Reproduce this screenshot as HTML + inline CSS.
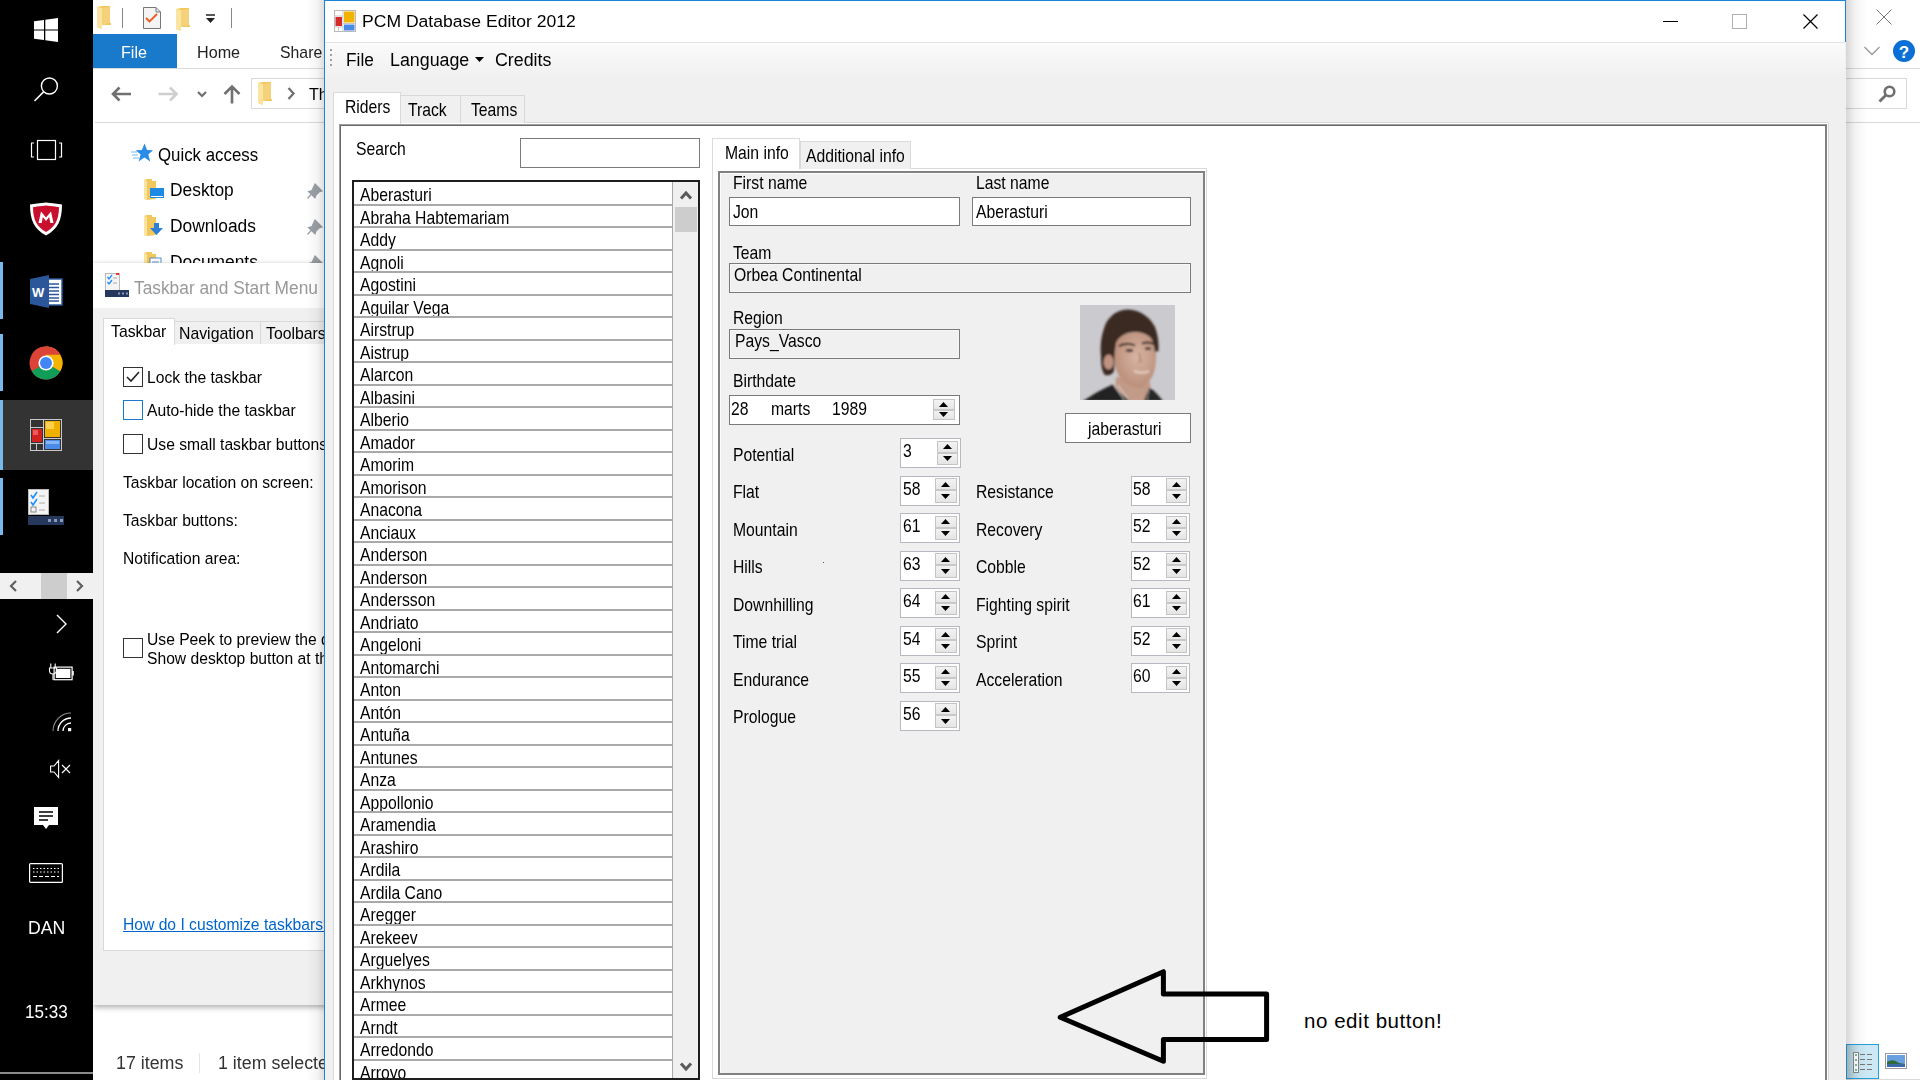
<!DOCTYPE html><html><head><meta charset="utf-8"><style>
html,body{margin:0;padding:0;width:1920px;height:1080px;overflow:hidden;background:#fff;position:relative;font-family:"Liberation Sans",sans-serif;}
.b{position:absolute;box-sizing:border-box;}
.t{position:absolute;white-space:nowrap;line-height:1;transform-origin:0 0;}
svg{position:absolute;overflow:visible;}
</style></head><body>

<div class="b" style="left:93px;top:34px;width:84px;height:34px;background:#1979ca"></div>
<div class="b" style="left:93px;top:68px;width:1827px;height:1px;background:#dadbdc"></div>
<span class="t" style="left:121px;top:43.61px;font-size:17px;transform:scaleX(0.95);color:#fff;">File</span>
<span class="t" style="left:197px;top:43.61px;font-size:17px;transform:scaleX(0.95);color:#222;">Home</span>
<span class="t" style="left:280px;top:43.61px;font-size:17px;transform:scaleX(0.93);color:#222;">Share</span>
<div class="b" style="left:95px;top:122px;width:1825px;height:1px;background:#d9d9d9"></div>
<div class="b" style="left:251px;top:78px;width:1656px;height:31px;border:1px solid #d9d9d9"></div>
<span class="t" style="left:309px;top:86.11px;font-size:17px;transform:scaleX(0.95);color:#000;">Th</span>
<span class="t" style="left:158px;top:145.76px;font-size:18px;transform:scaleX(0.935);color:#000;">Quick access</span>
<span class="t" style="left:170px;top:181.26px;font-size:18px;transform:scaleX(0.965);color:#000;">Desktop</span>
<span class="t" style="left:170px;top:217.26px;font-size:18px;transform:scaleX(0.965);color:#000;">Downloads</span>
<span class="t" style="left:170px;top:253.26px;font-size:18px;transform:scaleX(0.965);color:#000;">Documents</span>
<span class="t" style="left:116px;top:1053.76px;font-size:18px;transform:scaleX(0.99);color:#333;">17 items</span>
<div class="b" style="left:199px;top:1053px;width:1px;height:20px;background:#e5e5e5"></div>
<span class="t" style="left:218px;top:1053.76px;font-size:18px;transform:scaleX(0.99);color:#333;">1 item selected</span>
<svg style="left:97px;top:6px" width="16" height="24"><path d="M0 1 L5 0 L13 0 L13 17 L14 17 L14 19 L5 19 L5 23 L0 21 Z" fill="#f2c75c"/><path d="M0 1 L5 2 L5 23 L0 21 Z" fill="#fbe3a0"/><path d="M5 2 L13 1 L13 17 L5 19 Z" fill="#f5d27a"/></svg>
<div class="b" style="left:122px;top:8px;width:1px;height:20px;background:#888"></div>
<svg style="left:143px;top:7px" width="18" height="22"><path d="M0.5 0.5 H13 L17.5 5 V21.5 H0.5 Z" fill="#f4f4f4" stroke="#777"/><path d="M13 0.5 V5 H17.5" fill="none" stroke="#777"/><path d="M3 11 L6.5 14.5 L14 7" fill="none" stroke="#f05a1a" stroke-width="1.8"/></svg>
<svg style="left:176px;top:8px" width="16" height="24"><path d="M0 1 L5 0 L13 0 L13 17 L14 17 L14 19 L5 19 L5 23 L0 21 Z" fill="#f2c75c"/><path d="M0 1 L5 2 L5 23 L0 21 Z" fill="#fbe3a0"/><path d="M5 2 L13 1 L13 17 L5 19 Z" fill="#f5d27a"/></svg>
<svg style="left:205px;top:14px" width="12" height="10"><path d="M1 1 H10" stroke="#222" stroke-width="1.5"/><path d="M1 4 H10 L5.5 9 Z" fill="#222"/></svg>
<div class="b" style="left:231px;top:8px;width:1px;height:20px;background:#888"></div>
<svg style="left:111px;top:86px" width="22" height="16"><path d="M2 8 H20 M8.5 1.5 L2 8 L8.5 14.5" fill="none" stroke="#707070" stroke-width="2.6"/></svg>
<svg style="left:157px;top:86px" width="22" height="16"><path d="M19.5 8 H1.5 M13 1.5 L19.5 8 L13 14.5" fill="none" stroke="#cfcfcf" stroke-width="2.6"/></svg>
<svg style="left:197px;top:91px" width="10" height="7"><path d="M1 1 L5 5 L9 1" fill="none" stroke="#707070" stroke-width="2.2"/></svg>
<svg style="left:223px;top:84px" width="18" height="20"><path d="M9 19.5 V2.5 M1.5 10 L9 2.5 L16.5 10" fill="none" stroke="#707070" stroke-width="2.6"/></svg>
<svg style="left:258px;top:82px" width="16" height="24"><path d="M0 1 L5 0 L13 0 L13 17 L14 17 L14 19 L5 19 L5 23 L0 21 Z" fill="#f2c75c"/><path d="M0 1 L5 2 L5 23 L0 21 Z" fill="#fbe3a0"/><path d="M5 2 L13 1 L13 17 L5 19 Z" fill="#f5d27a"/></svg>
<svg style="left:287px;top:87px" width="8" height="13"><path d="M1.5 1 L6.5 6.5 L1.5 12" fill="none" stroke="#707070" stroke-width="2.3"/></svg>
<svg style="left:131px;top:143px" width="22" height="21"><path d="M13.5 0.5 L16 7 L22 7.3 L17.3 11.4 L19.2 18.4 L13.4 14.5 L7.6 18.4 L9.6 11.4 L4.7 7.3 L10.9 7 Z" fill="#2b8be8"/><path d="M0 9 H6 M1 12 H7 M2 15 H8" stroke="#7bbaf0" stroke-width="1"/></svg>
<svg style="left:144px;top:179px" width="20" height="22"><path d="M0 1 L3 0 L8 0 L8 2 L12 2 L12 20 L3 21 L0 20 Z" fill="#f2c75c"/><path d="M0 1 L3 2 L3 21 L0 20 Z" fill="#fbe3a0"/><rect x="6" y="9" width="14" height="10" fill="#1f8ae6"/><rect x="7" y="17" width="12" height="1" fill="#fff"/></svg>
<svg style="left:144px;top:215px" width="20" height="22"><path d="M0 1 L3 0 L8 0 L8 2 L12 2 L12 20 L3 21 L0 20 Z" fill="#f2c75c"/><path d="M0 1 L3 2 L3 21 L0 20 Z" fill="#fbe3a0"/><path d="M10 8 H15 V13 H19 L12.5 20 L6 13 H10 Z" fill="#2b7fd9"/></svg>
<svg style="left:144px;top:252px" width="20" height="22"><path d="M0 1 L3 0 L8 0 L8 2 L12 2 L12 20 L3 21 L0 20 Z" fill="#f2c75c"/><path d="M0 1 L3 2 L3 21 L0 20 Z" fill="#fbe3a0"/><rect x="6" y="6" width="11" height="14" fill="#fff" stroke="#3a76c0" stroke-width=".8"/><path d="M8 10 H15 M8 13 H15 M8 16 H15" stroke="#3a76c0" stroke-width=".8"/></svg>
<svg style="left:307px;top:182px" width="18" height="18"><path d="M8 2 L15 9 L12 10 L9 13 L8 16 L1.5 9.5 L5 8.5 Z M5 11.5 L0.5 16.5" fill="#9aa0a6" stroke="#9aa0a6" stroke-width="1.2"/></svg>
<svg style="left:307px;top:218px" width="18" height="18"><path d="M8 2 L15 9 L12 10 L9 13 L8 16 L1.5 9.5 L5 8.5 Z M5 11.5 L0.5 16.5" fill="#9aa0a6" stroke="#9aa0a6" stroke-width="1.2"/></svg>
<svg style="left:307px;top:254px" width="18" height="18"><path d="M8 2 L15 9 L12 10 L9 13 L8 16 L1.5 9.5 L5 8.5 Z M5 11.5 L0.5 16.5" fill="#9aa0a6" stroke="#9aa0a6" stroke-width="1.2"/></svg>
<svg style="left:1876px;top:9px" width="16" height="16"><path d="M0.5 0.5 L15.5 15.5 M15.5 0.5 L0.5 15.5" stroke="#777" stroke-width="1"/></svg>
<svg style="left:1864px;top:46px" width="16" height="10"><path d="M0.5 1 L8 8.5 L15.5 1" fill="none" stroke="#999" stroke-width="1.3"/></svg>
<svg style="left:1893px;top:40px" width="22" height="22"><circle cx="11" cy="11" r="11" fill="#0a6fd6"/><text x="11" y="17.5" text-anchor="middle" font-family="Liberation Sans" font-weight="bold" font-size="17" fill="#fff">?</text></svg>
<svg style="left:1878px;top:85px" width="18" height="18"><circle cx="11.5" cy="6.5" r="4.8" fill="none" stroke="#6f6f6f" stroke-width="2.6"/><path d="M8 10 L1.5 16.5" stroke="#6f6f6f" stroke-width="2.8"/></svg>
<div class="b" style="left:1846px;top:1044px;width:33px;height:35px;background:linear-gradient(to right,#b6d0dc,#cce8f5 40%);border:1.5px solid #26a0da"></div>
<svg style="left:1853px;top:1052px" width="20" height="21"><rect x="0.5" y="0.5" width="5" height="20" fill="#fff" stroke="#888"/><path d="M2 3 H4 M2 8 H4 M2 13 H4 M2 18 H4" stroke="#4a8" stroke-width="1.5"/><path d="M7 2.5 H12 M14 2.5 H19 M7 7.5 H12 M14 7.5 H19 M7 12.5 H12 M14 12.5 H19 M7 17.5 H12 M14 17.5 H19" stroke="#777" stroke-width="1"/></svg>
<svg style="left:1885px;top:1053px" width="22" height="16"><rect x="0.5" y="0.5" width="21" height="15" fill="#fff" stroke="#999"/><rect x="2" y="2" width="18" height="12" fill="#6aa0e0"/><path d="M2 9 Q8 5 14 10 L20 11 V14 H2 Z" fill="#2f6a3a"/><rect x="2" y="11" width="18" height="3" fill="#3a6aa8"/></svg>
<div class="b" style="left:1846px;top:1079px;width:74px;height:1px;background:#dcdcdc"></div>
<div class="b" style="left:93px;top:263px;width:240px;height:742px;background:#f0f0f0;box-shadow:0 2px 6px rgba(0,0,0,.35)"></div>
<div class="b" style="left:93px;top:263px;width:240px;height:45px;background:#fff"></div>
<svg style="left:105px;top:273px" width="24" height="24"><rect x="0.5" y="0.5" width="14" height="17" fill="#f4f4f4" stroke="#bbb"/><path d="M2.5 4 L4 6 L7 2 M2.5 9 L4 11 L7 7" fill="none" stroke="#1e90ff" stroke-width="1.3"/><path d="M8 5 H12 M8 10 H12" stroke="#aaa"/><rect x="11" y="0" width="3" height="2" fill="#e33"/><rect x="0" y="17" width="24" height="7" fill="#26385c"/><path d="M13 20.5 H15 M17 20.5 H19 M21 20.5 H23" stroke="#8899bb" stroke-width="2"/></svg>
<span class="t" style="left:134px;top:280.19px;font-size:17.5px;transform:scaleX(0.99);color:#999;">Taskbar and Start Menu</span>
<div class="b" style="left:103px;top:343px;width:240px;height:608px;background:#fff;border:1px solid #d9d9d9"></div>
<div class="b" style="left:103px;top:318px;width:72px;height:27px;background:#fff;border:1px solid #d9d9d9;border-bottom:none"></div>
<div class="b" style="left:174px;top:321px;width:87px;height:23px;background:#f0f0f0;border:1px solid #d9d9d9;border-bottom:none"></div>
<div class="b" style="left:260px;top:321px;width:80px;height:23px;background:#f0f0f0;border:1px solid #d9d9d9;border-bottom:none"></div>
<span class="t" style="left:111px;top:322.61px;font-size:17px;transform:scaleX(0.93);color:#000;">Taskbar</span>
<span class="t" style="left:179px;top:325.11px;font-size:17px;transform:scaleX(0.93);color:#000;">Navigation</span>
<span class="t" style="left:266px;top:325.11px;font-size:17px;transform:scaleX(0.93);color:#000;">Toolbars</span>
<div class="b" style="left:123px;top:367px;width:20px;height:20px;border:1px solid #333;background:#fff"></div>
<div class="b" style="left:123px;top:400px;width:20px;height:20px;border:1px solid #1979ca;background:#fff"></div>
<div class="b" style="left:123px;top:434px;width:20px;height:20px;border:1px solid #333;background:#fff"></div>
<div class="b" style="left:123px;top:638px;width:20px;height:20px;border:1px solid #333;background:#fff"></div>
<svg style="left:123px;top:367px" width="20" height="20"><path d="M4 10 L8 14 L16 5" fill="none" stroke="#222" stroke-width="1.6"/></svg>
<span class="t" style="left:147px;top:369.27px;font-size:17.4px;transform:scaleX(0.9);color:#000;">Lock the taskbar</span>
<span class="t" style="left:147px;top:402.27px;font-size:17.4px;transform:scaleX(0.9);color:#000;">Auto-hide the taskbar</span>
<span class="t" style="left:147px;top:436.27px;font-size:17.4px;transform:scaleX(0.9);color:#000;">Use small taskbar buttons</span>
<span class="t" style="left:123px;top:474.27px;font-size:17.4px;transform:scaleX(0.9);color:#000;">Taskbar location on screen:</span>
<span class="t" style="left:123px;top:512.27px;font-size:17.4px;transform:scaleX(0.9);color:#000;">Taskbar buttons:</span>
<span class="t" style="left:123px;top:550.27px;font-size:17.4px;transform:scaleX(0.9);color:#000;">Notification area:</span>
<span class="t" style="left:147px;top:631.27px;font-size:17.4px;transform:scaleX(0.9);color:#000;">Use Peek to preview the desktop when you move</span>
<span class="t" style="left:147px;top:650.27px;font-size:17.4px;transform:scaleX(0.9);color:#000;">Show desktop button at the end of the taskbar</span>
<span class="t" style="left:123px;top:916.27px;font-size:17.4px;transform:scaleX(0.9);color:#0066cc;"><u>How do I customize taskbars?</u></span>
<div class="b" style="left:306px;top:0;width:18px;height:1080px;background:linear-gradient(to left,rgba(0,0,0,.13),rgba(0,0,0,.04) 40%,rgba(0,0,0,0))"></div>
<div class="b" style="left:1846px;top:0;width:22px;height:1080px;background:linear-gradient(to right,rgba(0,0,0,.16),rgba(0,0,0,.05) 40%,rgba(0,0,0,0))"></div>
<div class="b" style="left:324px;top:0px;width:1522px;height:1080px;background:#f0f0f0;border-left:1px solid #1883d7"></div>
<div class="b" style="left:324px;top:0px;width:1522px;height:42px;border:1px solid #1883d7;border-bottom:none"></div>
<div class="b" style="left:1844px;top:43px;width:1px;height:34px;background:#d0d0d0"></div>
<div class="b" style="left:325px;top:1px;width:1520px;height:41px;background:#fff"></div>
<div class="b" style="left:325px;top:42px;width:1520px;height:1px;background:#e3e3e3"></div>
<div class="b" style="left:325px;top:43px;width:1520px;height:35px;background:linear-gradient(#fbfbfb,#f0f0f0)"></div>
<svg style="left:334px;top:10px" width="22" height="22"><rect x="0.5" y="0.5" width="21" height="21" fill="#fff" stroke="#b8b8b8"/><path d="M0.5 6 H9 M0.5 17 H9 M4.5 17 V21.5 M9 0.5 V21.5 M9 13.5 H21.5" stroke="#c8c8c8" stroke-width="1"/><rect x="1.5" y="7" width="6.5" height="9" fill="#d42a2a"/><rect x="10" y="1.5" width="10.5" height="11" fill="#f2b400"/><rect x="10" y="14.5" width="10.5" height="6" fill="#4a8ae8"/></svg>
<span class="t" style="left:362px;top:13.47px;font-size:17.4px;transform:scaleX(1.01);color:#000;">PCM Database Editor 2012</span>
<div class="b" style="left:1663px;top:21px;width:15px;height:1px;background:#000"></div>
<div class="b" style="left:1732px;top:14px;width:15px;height:15px;border:1px solid #b0b0b0"></div>
<svg style="left:1803px;top:14px" width="15" height="15"><path d="M0.5 0.5 L14.5 14.5 M14.5 0.5 L0.5 14.5" stroke="#000" stroke-width="1.2"/></svg>
<div class="b" style="left:330px;top:49px;width:2px;height:2px;background:#a0a0a0"></div>
<div class="b" style="left:330px;top:54px;width:2px;height:2px;background:#a0a0a0"></div>
<div class="b" style="left:330px;top:59px;width:2px;height:2px;background:#a0a0a0"></div>
<div class="b" style="left:330px;top:64px;width:2px;height:2px;background:#a0a0a0"></div>
<span class="t" style="left:346px;top:50.76px;font-size:18px;transform:scaleX(0.96);color:#000;">File</span>
<span class="t" style="left:390px;top:50.76px;font-size:18px;transform:scaleX(0.99);color:#000;">Language</span>
<svg style="left:475px;top:57px" width="10" height="6"><path d="M0 0 L9 0 L4.5 5 Z" fill="#000"/></svg>
<span class="t" style="left:495px;top:50.76px;font-size:18px;transform:scaleX(0.99);color:#000;">Credits</span>
<div class="b" style="left:333px;top:122px;width:1496px;height:980px;border:1px solid #d9d9d9;background:#fff"></div>
<div class="b" style="left:400px;top:95px;width:61px;height:28px;background:#f0f0f0;border:1px solid #d9d9d9;border-bottom:none"></div>
<div class="b" style="left:460px;top:95px;width:65px;height:28px;background:#f0f0f0;border:1px solid #d9d9d9;border-bottom:none"></div>
<div class="b" style="left:333px;top:92px;width:68px;height:32px;background:#fff;border:1px solid #d9d9d9;border-bottom:none"></div>
<span class="t" style="left:345px;top:97.84px;font-size:18.5px;transform:scaleX(0.85);color:#000;">Riders</span>
<span class="t" style="left:407.5px;top:100.94px;font-size:18.5px;transform:scaleX(0.85);color:#000;">Track</span>
<span class="t" style="left:471px;top:100.94px;font-size:18.5px;transform:scaleX(0.85);color:#000;">Teams</span>
<div class="b" style="left:339px;top:124px;width:1488px;height:960px;border-top:1px solid #a0a0a0;border-left:1px solid #a0a0a0;border-right:2px solid #808080;"></div>
<div class="b" style="left:340px;top:125px;width:1px;height:955px;background:#696969"></div>
<div class="b" style="left:340px;top:125px;width:1486px;height:1px;background:#696969"></div>
<span class="t" style="left:356px;top:140.34px;font-size:18.5px;transform:scaleX(0.85);color:#000;">Search</span>
<div class="b" style="left:520px;top:138px;width:180px;height:30px;border:1px solid #7a7a7a;background:#fff"></div>
<div class="b" style="left:352px;top:180px;width:348px;height:900px;border:2px solid #1e1e1e;background:#fff"></div>
<div class="b" style="left:354px;top:182px;width:318px;height:896px;overflow:hidden">
<div class="b" style="left:0;top:0.0px;width:318px;height:21.9px;overflow:hidden">
<span class="t" style="left:5.5px;top:4.34px;font-size:18.5px;transform:scaleX(.85)">Aberasturi</span></div>
<div class="b" style="left:0;top:21.9px;width:318px;height:1.8px;background:#a9a9a9"></div>
<div class="b" style="left:0;top:22.5px;width:318px;height:21.9px;overflow:hidden">
<span class="t" style="left:5.5px;top:4.34px;font-size:18.5px;transform:scaleX(.85)">Abraha Habtemariam</span></div>
<div class="b" style="left:0;top:44.4px;width:318px;height:1.8px;background:#a9a9a9"></div>
<div class="b" style="left:0;top:45.0px;width:318px;height:21.9px;overflow:hidden">
<span class="t" style="left:5.5px;top:4.34px;font-size:18.5px;transform:scaleX(.85)">Addy</span></div>
<div class="b" style="left:0;top:66.9px;width:318px;height:1.8px;background:#a9a9a9"></div>
<div class="b" style="left:0;top:67.5px;width:318px;height:21.9px;overflow:hidden">
<span class="t" style="left:5.5px;top:4.34px;font-size:18.5px;transform:scaleX(.85)">Agnoli</span></div>
<div class="b" style="left:0;top:89.4px;width:318px;height:1.8px;background:#a9a9a9"></div>
<div class="b" style="left:0;top:90.0px;width:318px;height:21.9px;overflow:hidden">
<span class="t" style="left:5.5px;top:4.34px;font-size:18.5px;transform:scaleX(.85)">Agostini</span></div>
<div class="b" style="left:0;top:111.9px;width:318px;height:1.8px;background:#a9a9a9"></div>
<div class="b" style="left:0;top:112.5px;width:318px;height:21.9px;overflow:hidden">
<span class="t" style="left:5.5px;top:4.34px;font-size:18.5px;transform:scaleX(.85)">Aguilar Vega</span></div>
<div class="b" style="left:0;top:134.4px;width:318px;height:1.8px;background:#a9a9a9"></div>
<div class="b" style="left:0;top:135.0px;width:318px;height:21.9px;overflow:hidden">
<span class="t" style="left:5.5px;top:4.34px;font-size:18.5px;transform:scaleX(.85)">Airstrup</span></div>
<div class="b" style="left:0;top:156.9px;width:318px;height:1.8px;background:#a9a9a9"></div>
<div class="b" style="left:0;top:157.5px;width:318px;height:21.9px;overflow:hidden">
<span class="t" style="left:5.5px;top:4.34px;font-size:18.5px;transform:scaleX(.85)">Aistrup</span></div>
<div class="b" style="left:0;top:179.4px;width:318px;height:1.8px;background:#a9a9a9"></div>
<div class="b" style="left:0;top:180.0px;width:318px;height:21.9px;overflow:hidden">
<span class="t" style="left:5.5px;top:4.34px;font-size:18.5px;transform:scaleX(.85)">Alarcon</span></div>
<div class="b" style="left:0;top:201.9px;width:318px;height:1.8px;background:#a9a9a9"></div>
<div class="b" style="left:0;top:202.5px;width:318px;height:21.9px;overflow:hidden">
<span class="t" style="left:5.5px;top:4.34px;font-size:18.5px;transform:scaleX(.85)">Albasini</span></div>
<div class="b" style="left:0;top:224.4px;width:318px;height:1.8px;background:#a9a9a9"></div>
<div class="b" style="left:0;top:225.0px;width:318px;height:21.9px;overflow:hidden">
<span class="t" style="left:5.5px;top:4.34px;font-size:18.5px;transform:scaleX(.85)">Alberio</span></div>
<div class="b" style="left:0;top:246.9px;width:318px;height:1.8px;background:#a9a9a9"></div>
<div class="b" style="left:0;top:247.5px;width:318px;height:21.9px;overflow:hidden">
<span class="t" style="left:5.5px;top:4.34px;font-size:18.5px;transform:scaleX(.85)">Amador</span></div>
<div class="b" style="left:0;top:269.4px;width:318px;height:1.8px;background:#a9a9a9"></div>
<div class="b" style="left:0;top:270.0px;width:318px;height:21.9px;overflow:hidden">
<span class="t" style="left:5.5px;top:4.34px;font-size:18.5px;transform:scaleX(.85)">Amorim</span></div>
<div class="b" style="left:0;top:291.9px;width:318px;height:1.8px;background:#a9a9a9"></div>
<div class="b" style="left:0;top:292.5px;width:318px;height:21.9px;overflow:hidden">
<span class="t" style="left:5.5px;top:4.34px;font-size:18.5px;transform:scaleX(.85)">Amorison</span></div>
<div class="b" style="left:0;top:314.4px;width:318px;height:1.8px;background:#a9a9a9"></div>
<div class="b" style="left:0;top:315.0px;width:318px;height:21.9px;overflow:hidden">
<span class="t" style="left:5.5px;top:4.34px;font-size:18.5px;transform:scaleX(.85)">Anacona</span></div>
<div class="b" style="left:0;top:336.9px;width:318px;height:1.8px;background:#a9a9a9"></div>
<div class="b" style="left:0;top:337.5px;width:318px;height:21.9px;overflow:hidden">
<span class="t" style="left:5.5px;top:4.34px;font-size:18.5px;transform:scaleX(.85)">Anciaux</span></div>
<div class="b" style="left:0;top:359.4px;width:318px;height:1.8px;background:#a9a9a9"></div>
<div class="b" style="left:0;top:360.0px;width:318px;height:21.9px;overflow:hidden">
<span class="t" style="left:5.5px;top:4.34px;font-size:18.5px;transform:scaleX(.85)">Anderson</span></div>
<div class="b" style="left:0;top:381.9px;width:318px;height:1.8px;background:#a9a9a9"></div>
<div class="b" style="left:0;top:382.5px;width:318px;height:21.9px;overflow:hidden">
<span class="t" style="left:5.5px;top:4.34px;font-size:18.5px;transform:scaleX(.85)">Anderson</span></div>
<div class="b" style="left:0;top:404.4px;width:318px;height:1.8px;background:#a9a9a9"></div>
<div class="b" style="left:0;top:405.0px;width:318px;height:21.9px;overflow:hidden">
<span class="t" style="left:5.5px;top:4.34px;font-size:18.5px;transform:scaleX(.85)">Andersson</span></div>
<div class="b" style="left:0;top:426.9px;width:318px;height:1.8px;background:#a9a9a9"></div>
<div class="b" style="left:0;top:427.5px;width:318px;height:21.9px;overflow:hidden">
<span class="t" style="left:5.5px;top:4.34px;font-size:18.5px;transform:scaleX(.85)">Andriato</span></div>
<div class="b" style="left:0;top:449.4px;width:318px;height:1.8px;background:#a9a9a9"></div>
<div class="b" style="left:0;top:450.0px;width:318px;height:21.9px;overflow:hidden">
<span class="t" style="left:5.5px;top:4.34px;font-size:18.5px;transform:scaleX(.85)">Angeloni</span></div>
<div class="b" style="left:0;top:471.9px;width:318px;height:1.8px;background:#a9a9a9"></div>
<div class="b" style="left:0;top:472.5px;width:318px;height:21.9px;overflow:hidden">
<span class="t" style="left:5.5px;top:4.34px;font-size:18.5px;transform:scaleX(.85)">Antomarchi</span></div>
<div class="b" style="left:0;top:494.4px;width:318px;height:1.8px;background:#a9a9a9"></div>
<div class="b" style="left:0;top:495.0px;width:318px;height:21.9px;overflow:hidden">
<span class="t" style="left:5.5px;top:4.34px;font-size:18.5px;transform:scaleX(.85)">Anton</span></div>
<div class="b" style="left:0;top:516.9px;width:318px;height:1.8px;background:#a9a9a9"></div>
<div class="b" style="left:0;top:517.5px;width:318px;height:21.9px;overflow:hidden">
<span class="t" style="left:5.5px;top:4.34px;font-size:18.5px;transform:scaleX(.85)">Ant&oacute;n</span></div>
<div class="b" style="left:0;top:539.4px;width:318px;height:1.8px;background:#a9a9a9"></div>
<div class="b" style="left:0;top:540.0px;width:318px;height:21.9px;overflow:hidden">
<span class="t" style="left:5.5px;top:4.34px;font-size:18.5px;transform:scaleX(.85)">Antu&ntilde;a</span></div>
<div class="b" style="left:0;top:561.9px;width:318px;height:1.8px;background:#a9a9a9"></div>
<div class="b" style="left:0;top:562.5px;width:318px;height:21.9px;overflow:hidden">
<span class="t" style="left:5.5px;top:4.34px;font-size:18.5px;transform:scaleX(.85)">Antunes</span></div>
<div class="b" style="left:0;top:584.4px;width:318px;height:1.8px;background:#a9a9a9"></div>
<div class="b" style="left:0;top:585.0px;width:318px;height:21.9px;overflow:hidden">
<span class="t" style="left:5.5px;top:4.34px;font-size:18.5px;transform:scaleX(.85)">Anza</span></div>
<div class="b" style="left:0;top:606.9px;width:318px;height:1.8px;background:#a9a9a9"></div>
<div class="b" style="left:0;top:607.5px;width:318px;height:21.9px;overflow:hidden">
<span class="t" style="left:5.5px;top:4.34px;font-size:18.5px;transform:scaleX(.85)">Appollonio</span></div>
<div class="b" style="left:0;top:629.4px;width:318px;height:1.8px;background:#a9a9a9"></div>
<div class="b" style="left:0;top:630.0px;width:318px;height:21.9px;overflow:hidden">
<span class="t" style="left:5.5px;top:4.34px;font-size:18.5px;transform:scaleX(.85)">Aramendia</span></div>
<div class="b" style="left:0;top:651.9px;width:318px;height:1.8px;background:#a9a9a9"></div>
<div class="b" style="left:0;top:652.5px;width:318px;height:21.9px;overflow:hidden">
<span class="t" style="left:5.5px;top:4.34px;font-size:18.5px;transform:scaleX(.85)">Arashiro</span></div>
<div class="b" style="left:0;top:674.4px;width:318px;height:1.8px;background:#a9a9a9"></div>
<div class="b" style="left:0;top:675.0px;width:318px;height:21.9px;overflow:hidden">
<span class="t" style="left:5.5px;top:4.34px;font-size:18.5px;transform:scaleX(.85)">Ardila</span></div>
<div class="b" style="left:0;top:696.9px;width:318px;height:1.8px;background:#a9a9a9"></div>
<div class="b" style="left:0;top:697.5px;width:318px;height:21.9px;overflow:hidden">
<span class="t" style="left:5.5px;top:4.34px;font-size:18.5px;transform:scaleX(.85)">Ardila Cano</span></div>
<div class="b" style="left:0;top:719.4px;width:318px;height:1.8px;background:#a9a9a9"></div>
<div class="b" style="left:0;top:720.0px;width:318px;height:21.9px;overflow:hidden">
<span class="t" style="left:5.5px;top:4.34px;font-size:18.5px;transform:scaleX(.85)">Aregger</span></div>
<div class="b" style="left:0;top:741.9px;width:318px;height:1.8px;background:#a9a9a9"></div>
<div class="b" style="left:0;top:742.5px;width:318px;height:21.9px;overflow:hidden">
<span class="t" style="left:5.5px;top:4.34px;font-size:18.5px;transform:scaleX(.85)">Arekeev</span></div>
<div class="b" style="left:0;top:764.4px;width:318px;height:1.8px;background:#a9a9a9"></div>
<div class="b" style="left:0;top:765.0px;width:318px;height:21.9px;overflow:hidden">
<span class="t" style="left:5.5px;top:4.34px;font-size:18.5px;transform:scaleX(.85)">Arguelyes</span></div>
<div class="b" style="left:0;top:786.9px;width:318px;height:1.8px;background:#a9a9a9"></div>
<div class="b" style="left:0;top:787.5px;width:318px;height:21.9px;overflow:hidden">
<span class="t" style="left:5.5px;top:4.34px;font-size:18.5px;transform:scaleX(.85)">Arkhynos</span></div>
<div class="b" style="left:0;top:809.4px;width:318px;height:1.8px;background:#a9a9a9"></div>
<div class="b" style="left:0;top:810.0px;width:318px;height:21.9px;overflow:hidden">
<span class="t" style="left:5.5px;top:4.34px;font-size:18.5px;transform:scaleX(.85)">Armee</span></div>
<div class="b" style="left:0;top:831.9px;width:318px;height:1.8px;background:#a9a9a9"></div>
<div class="b" style="left:0;top:832.5px;width:318px;height:21.9px;overflow:hidden">
<span class="t" style="left:5.5px;top:4.34px;font-size:18.5px;transform:scaleX(.85)">Arndt</span></div>
<div class="b" style="left:0;top:854.4px;width:318px;height:1.8px;background:#a9a9a9"></div>
<div class="b" style="left:0;top:855.0px;width:318px;height:21.9px;overflow:hidden">
<span class="t" style="left:5.5px;top:4.34px;font-size:18.5px;transform:scaleX(.85)">Arredondo</span></div>
<div class="b" style="left:0;top:876.9px;width:318px;height:1.8px;background:#a9a9a9"></div>
<div class="b" style="left:0;top:877.5px;width:318px;height:21.9px;overflow:hidden">
<span class="t" style="left:5.5px;top:4.34px;font-size:18.5px;transform:scaleX(.85)">Arroyo</span></div>
<div class="b" style="left:0;top:899.4px;width:318px;height:1.8px;background:#a9a9a9"></div>
</div>
<div class="b" style="left:671.5px;top:182px;width:1.5px;height:896px;background:#a9a9a9"></div>
<div class="b" style="left:673px;top:182px;width:25px;height:896px;background:#f0f0f0"></div>
<div class="b" style="left:675px;top:207px;width:22px;height:25px;background:#cdcdcd"></div>
<svg style="left:680px;top:190px" width="12" height="10"><path d="M1 8.5 L6 3 L11 8.5" fill="none" stroke="#5a5a5a" stroke-width="3"/></svg>
<svg style="left:680px;top:1062px" width="12" height="10"><path d="M1 1.5 L6 7 L11 1.5" fill="none" stroke="#5a5a5a" stroke-width="3"/></svg>
<div class="b" style="left:712px;top:168px;width:495px;height:911px;border:1px solid #dadada;background:#fff"></div>
<div class="b" style="left:800px;top:141px;width:111px;height:28px;background:#f0f0f0;border:1px solid #dadada;border-bottom:none"></div>
<div class="b" style="left:712px;top:138px;width:88px;height:31px;background:#fff;border:1px solid #dadada;border-bottom:none"></div>
<span class="t" style="left:724.6px;top:143.94px;font-size:18.5px;transform:scaleX(0.85);color:#000;">Main info</span>
<span class="t" style="left:806px;top:146.94px;font-size:18.5px;transform:scaleX(0.85);color:#000;">Additional info</span>
<div class="b" style="left:718px;top:171px;width:487px;height:904px;border:2px solid #828282;background:#f0f0f0"></div>
<div class="b" style="left:720px;top:173px;width:483px;height:900px;border-top:1px solid #fcfcfc;border-left:1px solid #fcfcfc"></div>
<span class="t" style="left:733px;top:174.34px;font-size:18.5px;transform:scaleX(0.85);color:#000;">First name</span>
<span class="t" style="left:976px;top:174.34px;font-size:18.5px;transform:scaleX(0.85);color:#000;">Last name</span>
<div class="b" style="left:728.7px;top:197px;width:231px;height:29px;border:1px solid #7a7a7a;background:#fff;box-shadow:inset 0 0 0 1px #fff"></div>
<div class="b" style="left:971.7px;top:197px;width:219px;height:29px;border:1px solid #7a7a7a;background:#fff;box-shadow:inset 0 0 0 1px #fff"></div>
<span class="t" style="left:733px;top:203.04px;font-size:18.5px;transform:scaleX(0.85);color:#000;">Jon</span>
<span class="t" style="left:976px;top:203.04px;font-size:18.5px;transform:scaleX(0.85);color:#000;">Aberasturi</span>
<span class="t" style="left:733px;top:244.14px;font-size:18.5px;transform:scaleX(0.85);color:#000;">Team</span>
<div class="b" style="left:728.7px;top:263px;width:462px;height:29.5px;border:1px solid #7a7a7a;background:#f0f0f0;box-shadow:inset 0 0 0 1px #f7f7f7"></div>
<span class="t" style="left:733.5px;top:265.84px;font-size:18.5px;transform:scaleX(0.85);color:#000;">Orbea Continental</span>
<span class="t" style="left:733px;top:309.34px;font-size:18.5px;transform:scaleX(0.85);color:#000;">Region</span>
<div class="b" style="left:728.7px;top:329px;width:231px;height:29.5px;border:1px solid #7a7a7a;background:#f0f0f0;box-shadow:inset 0 0 0 1px #f7f7f7"></div>
<span class="t" style="left:735px;top:332.34px;font-size:18.5px;transform:scaleX(0.85);color:#000;">Pays_Vasco</span>
<span class="t" style="left:733px;top:372.34px;font-size:18.5px;transform:scaleX(0.85);color:#000;">Birthdate</span>
<div class="b" style="left:728.7px;top:395px;width:231px;height:29.5px;border:1px solid #7a7a7a;background:#fff;box-shadow:inset 0 0 0 1px #fff"></div>
<span class="t" style="left:731px;top:400.34px;font-size:18.5px;transform:scaleX(0.85);color:#000;">28</span>
<span class="t" style="left:771px;top:400.34px;font-size:18.5px;transform:scaleX(0.85);color:#000;">marts</span>
<span class="t" style="left:832.4px;top:400.34px;font-size:18.5px;transform:scaleX(0.85);color:#000;">1989</span>
<div class="b" style="left:932.6px;top:399px;width:22px;height:21px;background:linear-gradient(#f3f3f3,#e5e5e5 50%,#f3f3f3 50%,#e5e5e5);border:1px solid #c4c4c4"></div>
<div class="b" style="left:932.6px;top:408.5px;width:22px;height:2px;background:#c8c8c8"></div>
<svg style="left:939.1px;top:401.8px" width="9" height="5"><path d="M0 5 L4.5 0 L9 5 Z" fill="#000"/></svg>
<svg style="left:939.1px;top:412.2px" width="9" height="5"><path d="M0 0 L4.5 5 L9 0 Z" fill="#000"/></svg>
<div class="b" style="left:1065px;top:413px;width:126px;height:29.5px;border:1px solid #7a7a7a;background:#fff;box-shadow:inset 0 0 0 1px #fff"></div>
<span class="t" style="left:1088px;top:419.74px;font-size:18.5px;transform:scaleX(0.85);color:#000;">jaberasturi</span>
<span class="t" style="left:733px;top:445.84px;font-size:18.5px;transform:scaleX(0.85);color:#000;">Potential</span>
<div class="b" style="left:900px;top:438.0px;width:61px;height:30px;border:1px solid #b8b8c0;background:#fff"></div>
<span class="t" style="left:902.7px;top:442.34px;font-size:18.5px;transform:scaleX(0.85);color:#000;">3</span>
<div class="b" style="left:936.5px;top:440.5px;width:21.5px;height:24.5px;background:linear-gradient(#f3f3f3,#e5e5e5 50%,#f3f3f3 50%,#e5e5e5);border:1px solid #c4c4c4"></div>
<div class="b" style="left:936.5px;top:451.8px;width:21.5px;height:2px;background:#c8c8c8"></div>
<svg style="left:942.8px;top:444.1px" width="9" height="5"><path d="M0 5 L4.5 0 L9 5 Z" fill="#000"/></svg>
<svg style="left:942.8px;top:456.4px" width="9" height="5"><path d="M0 0 L4.5 5 L9 0 Z" fill="#000"/></svg>
<span class="t" style="left:733px;top:483.34px;font-size:18.5px;transform:scaleX(0.85);color:#000;">Flat</span>
<div class="b" style="left:900px;top:475.5px;width:59.5px;height:30px;border:1px solid #b8b8c0;background:#fff"></div>
<span class="t" style="left:902.7px;top:479.84px;font-size:18.5px;transform:scaleX(0.85);color:#000;">58</span>
<div class="b" style="left:935.0px;top:478.0px;width:21.5px;height:24.5px;background:linear-gradient(#f3f3f3,#e5e5e5 50%,#f3f3f3 50%,#e5e5e5);border:1px solid #c4c4c4"></div>
<div class="b" style="left:935.0px;top:489.2px;width:21.5px;height:2px;background:#c8c8c8"></div>
<svg style="left:941.2px;top:481.6px" width="9" height="5"><path d="M0 5 L4.5 0 L9 5 Z" fill="#000"/></svg>
<svg style="left:941.2px;top:493.9px" width="9" height="5"><path d="M0 0 L4.5 5 L9 0 Z" fill="#000"/></svg>
<span class="t" style="left:733px;top:520.84px;font-size:18.5px;transform:scaleX(0.85);color:#000;">Mountain</span>
<div class="b" style="left:900px;top:513.0px;width:59.5px;height:30px;border:1px solid #b8b8c0;background:#fff"></div>
<span class="t" style="left:902.7px;top:517.34px;font-size:18.5px;transform:scaleX(0.85);color:#000;">61</span>
<div class="b" style="left:935.0px;top:515.5px;width:21.5px;height:24.5px;background:linear-gradient(#f3f3f3,#e5e5e5 50%,#f3f3f3 50%,#e5e5e5);border:1px solid #c4c4c4"></div>
<div class="b" style="left:935.0px;top:526.8px;width:21.5px;height:2px;background:#c8c8c8"></div>
<svg style="left:941.2px;top:519.1px" width="9" height="5"><path d="M0 5 L4.5 0 L9 5 Z" fill="#000"/></svg>
<svg style="left:941.2px;top:531.4px" width="9" height="5"><path d="M0 0 L4.5 5 L9 0 Z" fill="#000"/></svg>
<span class="t" style="left:733px;top:558.34px;font-size:18.5px;transform:scaleX(0.85);color:#000;">Hills</span>
<div class="b" style="left:900px;top:550.5px;width:59.5px;height:30px;border:1px solid #b8b8c0;background:#fff"></div>
<span class="t" style="left:902.7px;top:554.84px;font-size:18.5px;transform:scaleX(0.85);color:#000;">63</span>
<div class="b" style="left:935.0px;top:553.0px;width:21.5px;height:24.5px;background:linear-gradient(#f3f3f3,#e5e5e5 50%,#f3f3f3 50%,#e5e5e5);border:1px solid #c4c4c4"></div>
<div class="b" style="left:935.0px;top:564.2px;width:21.5px;height:2px;background:#c8c8c8"></div>
<svg style="left:941.2px;top:556.6px" width="9" height="5"><path d="M0 5 L4.5 0 L9 5 Z" fill="#000"/></svg>
<svg style="left:941.2px;top:568.9px" width="9" height="5"><path d="M0 0 L4.5 5 L9 0 Z" fill="#000"/></svg>
<span class="t" style="left:733px;top:595.84px;font-size:18.5px;transform:scaleX(0.85);color:#000;">Downhilling</span>
<div class="b" style="left:900px;top:588.0px;width:59.5px;height:30px;border:1px solid #b8b8c0;background:#fff"></div>
<span class="t" style="left:902.7px;top:592.34px;font-size:18.5px;transform:scaleX(0.85);color:#000;">64</span>
<div class="b" style="left:935.0px;top:590.5px;width:21.5px;height:24.5px;background:linear-gradient(#f3f3f3,#e5e5e5 50%,#f3f3f3 50%,#e5e5e5);border:1px solid #c4c4c4"></div>
<div class="b" style="left:935.0px;top:601.8px;width:21.5px;height:2px;background:#c8c8c8"></div>
<svg style="left:941.2px;top:594.1px" width="9" height="5"><path d="M0 5 L4.5 0 L9 5 Z" fill="#000"/></svg>
<svg style="left:941.2px;top:606.4px" width="9" height="5"><path d="M0 0 L4.5 5 L9 0 Z" fill="#000"/></svg>
<span class="t" style="left:733px;top:633.34px;font-size:18.5px;transform:scaleX(0.85);color:#000;">Time trial</span>
<div class="b" style="left:900px;top:625.5px;width:59.5px;height:30px;border:1px solid #b8b8c0;background:#fff"></div>
<span class="t" style="left:902.7px;top:629.84px;font-size:18.5px;transform:scaleX(0.85);color:#000;">54</span>
<div class="b" style="left:935.0px;top:628.0px;width:21.5px;height:24.5px;background:linear-gradient(#f3f3f3,#e5e5e5 50%,#f3f3f3 50%,#e5e5e5);border:1px solid #c4c4c4"></div>
<div class="b" style="left:935.0px;top:639.2px;width:21.5px;height:2px;background:#c8c8c8"></div>
<svg style="left:941.2px;top:631.6px" width="9" height="5"><path d="M0 5 L4.5 0 L9 5 Z" fill="#000"/></svg>
<svg style="left:941.2px;top:643.9px" width="9" height="5"><path d="M0 0 L4.5 5 L9 0 Z" fill="#000"/></svg>
<span class="t" style="left:733px;top:670.84px;font-size:18.5px;transform:scaleX(0.85);color:#000;">Endurance</span>
<div class="b" style="left:900px;top:663.0px;width:59.5px;height:30px;border:1px solid #b8b8c0;background:#fff"></div>
<span class="t" style="left:902.7px;top:667.34px;font-size:18.5px;transform:scaleX(0.85);color:#000;">55</span>
<div class="b" style="left:935.0px;top:665.5px;width:21.5px;height:24.5px;background:linear-gradient(#f3f3f3,#e5e5e5 50%,#f3f3f3 50%,#e5e5e5);border:1px solid #c4c4c4"></div>
<div class="b" style="left:935.0px;top:676.8px;width:21.5px;height:2px;background:#c8c8c8"></div>
<svg style="left:941.2px;top:669.1px" width="9" height="5"><path d="M0 5 L4.5 0 L9 5 Z" fill="#000"/></svg>
<svg style="left:941.2px;top:681.4px" width="9" height="5"><path d="M0 0 L4.5 5 L9 0 Z" fill="#000"/></svg>
<span class="t" style="left:733px;top:708.34px;font-size:18.5px;transform:scaleX(0.85);color:#000;">Prologue</span>
<div class="b" style="left:900px;top:700.5px;width:59.5px;height:30px;border:1px solid #b8b8c0;background:#fff"></div>
<span class="t" style="left:902.7px;top:704.84px;font-size:18.5px;transform:scaleX(0.85);color:#000;">56</span>
<div class="b" style="left:935.0px;top:703.0px;width:21.5px;height:24.5px;background:linear-gradient(#f3f3f3,#e5e5e5 50%,#f3f3f3 50%,#e5e5e5);border:1px solid #c4c4c4"></div>
<div class="b" style="left:935.0px;top:714.2px;width:21.5px;height:2px;background:#c8c8c8"></div>
<svg style="left:941.2px;top:706.6px" width="9" height="5"><path d="M0 5 L4.5 0 L9 5 Z" fill="#000"/></svg>
<svg style="left:941.2px;top:718.9px" width="9" height="5"><path d="M0 0 L4.5 5 L9 0 Z" fill="#000"/></svg>
<span class="t" style="left:976.4px;top:483.34px;font-size:18.5px;transform:scaleX(0.85);color:#000;">Resistance</span>
<div class="b" style="left:1130.5px;top:475.5px;width:59.5px;height:30px;border:1px solid #b8b8c0;background:#fff"></div>
<span class="t" style="left:1133.2px;top:479.84px;font-size:18.5px;transform:scaleX(0.85);color:#000;">58</span>
<div class="b" style="left:1165.5px;top:478.0px;width:21.5px;height:24.5px;background:linear-gradient(#f3f3f3,#e5e5e5 50%,#f3f3f3 50%,#e5e5e5);border:1px solid #c4c4c4"></div>
<div class="b" style="left:1165.5px;top:489.2px;width:21.5px;height:2px;background:#c8c8c8"></div>
<svg style="left:1171.8px;top:481.6px" width="9" height="5"><path d="M0 5 L4.5 0 L9 5 Z" fill="#000"/></svg>
<svg style="left:1171.8px;top:493.9px" width="9" height="5"><path d="M0 0 L4.5 5 L9 0 Z" fill="#000"/></svg>
<span class="t" style="left:976.4px;top:520.84px;font-size:18.5px;transform:scaleX(0.85);color:#000;">Recovery</span>
<div class="b" style="left:1130.5px;top:513.0px;width:59.5px;height:30px;border:1px solid #b8b8c0;background:#fff"></div>
<span class="t" style="left:1133.2px;top:517.34px;font-size:18.5px;transform:scaleX(0.85);color:#000;">52</span>
<div class="b" style="left:1165.5px;top:515.5px;width:21.5px;height:24.5px;background:linear-gradient(#f3f3f3,#e5e5e5 50%,#f3f3f3 50%,#e5e5e5);border:1px solid #c4c4c4"></div>
<div class="b" style="left:1165.5px;top:526.8px;width:21.5px;height:2px;background:#c8c8c8"></div>
<svg style="left:1171.8px;top:519.1px" width="9" height="5"><path d="M0 5 L4.5 0 L9 5 Z" fill="#000"/></svg>
<svg style="left:1171.8px;top:531.4px" width="9" height="5"><path d="M0 0 L4.5 5 L9 0 Z" fill="#000"/></svg>
<span class="t" style="left:976.4px;top:558.34px;font-size:18.5px;transform:scaleX(0.85);color:#000;">Cobble</span>
<div class="b" style="left:1130.5px;top:550.5px;width:59.5px;height:30px;border:1px solid #b8b8c0;background:#fff"></div>
<span class="t" style="left:1133.2px;top:554.84px;font-size:18.5px;transform:scaleX(0.85);color:#000;">52</span>
<div class="b" style="left:1165.5px;top:553.0px;width:21.5px;height:24.5px;background:linear-gradient(#f3f3f3,#e5e5e5 50%,#f3f3f3 50%,#e5e5e5);border:1px solid #c4c4c4"></div>
<div class="b" style="left:1165.5px;top:564.2px;width:21.5px;height:2px;background:#c8c8c8"></div>
<svg style="left:1171.8px;top:556.6px" width="9" height="5"><path d="M0 5 L4.5 0 L9 5 Z" fill="#000"/></svg>
<svg style="left:1171.8px;top:568.9px" width="9" height="5"><path d="M0 0 L4.5 5 L9 0 Z" fill="#000"/></svg>
<span class="t" style="left:976.4px;top:595.84px;font-size:18.5px;transform:scaleX(0.85);color:#000;">Fighting spirit</span>
<div class="b" style="left:1130.5px;top:588.0px;width:59.5px;height:30px;border:1px solid #b8b8c0;background:#fff"></div>
<span class="t" style="left:1133.2px;top:592.34px;font-size:18.5px;transform:scaleX(0.85);color:#000;">61</span>
<div class="b" style="left:1165.5px;top:590.5px;width:21.5px;height:24.5px;background:linear-gradient(#f3f3f3,#e5e5e5 50%,#f3f3f3 50%,#e5e5e5);border:1px solid #c4c4c4"></div>
<div class="b" style="left:1165.5px;top:601.8px;width:21.5px;height:2px;background:#c8c8c8"></div>
<svg style="left:1171.8px;top:594.1px" width="9" height="5"><path d="M0 5 L4.5 0 L9 5 Z" fill="#000"/></svg>
<svg style="left:1171.8px;top:606.4px" width="9" height="5"><path d="M0 0 L4.5 5 L9 0 Z" fill="#000"/></svg>
<span class="t" style="left:976.4px;top:633.34px;font-size:18.5px;transform:scaleX(0.85);color:#000;">Sprint</span>
<div class="b" style="left:1130.5px;top:625.5px;width:59.5px;height:30px;border:1px solid #b8b8c0;background:#fff"></div>
<span class="t" style="left:1133.2px;top:629.84px;font-size:18.5px;transform:scaleX(0.85);color:#000;">52</span>
<div class="b" style="left:1165.5px;top:628.0px;width:21.5px;height:24.5px;background:linear-gradient(#f3f3f3,#e5e5e5 50%,#f3f3f3 50%,#e5e5e5);border:1px solid #c4c4c4"></div>
<div class="b" style="left:1165.5px;top:639.2px;width:21.5px;height:2px;background:#c8c8c8"></div>
<svg style="left:1171.8px;top:631.6px" width="9" height="5"><path d="M0 5 L4.5 0 L9 5 Z" fill="#000"/></svg>
<svg style="left:1171.8px;top:643.9px" width="9" height="5"><path d="M0 0 L4.5 5 L9 0 Z" fill="#000"/></svg>
<span class="t" style="left:976.4px;top:670.84px;font-size:18.5px;transform:scaleX(0.85);color:#000;">Acceleration</span>
<div class="b" style="left:1130.5px;top:663.0px;width:59.5px;height:30px;border:1px solid #b8b8c0;background:#fff"></div>
<span class="t" style="left:1133.2px;top:667.34px;font-size:18.5px;transform:scaleX(0.85);color:#000;">60</span>
<div class="b" style="left:1165.5px;top:665.5px;width:21.5px;height:24.5px;background:linear-gradient(#f3f3f3,#e5e5e5 50%,#f3f3f3 50%,#e5e5e5);border:1px solid #c4c4c4"></div>
<div class="b" style="left:1165.5px;top:676.8px;width:21.5px;height:2px;background:#c8c8c8"></div>
<svg style="left:1171.8px;top:669.1px" width="9" height="5"><path d="M0 5 L4.5 0 L9 5 Z" fill="#000"/></svg>
<svg style="left:1171.8px;top:681.4px" width="9" height="5"><path d="M0 0 L4.5 5 L9 0 Z" fill="#000"/></svg>
<div class="b" style="left:823px;top:562px;width:1px;height:1px;background:#555"></div>
<svg style="left:1080px;top:305px" width="95" height="95"><defs><filter id="bl" x="-10%" y="-10%" width="120%" height="120%"><feGaussianBlur stdDeviation=".9"/></filter><clipPath id="pc"><rect width="95" height="95"/></clipPath><radialGradient id="fg" cx=".55" cy=".45" r=".6"><stop offset="0" stop-color="#d8b4a2"/><stop offset="1" stop-color="#b88c78"/></radialGradient></defs><rect width="95" height="95" fill="#cbcbcf"/><g clip-path="url(#pc)" filter="url(#bl)"><path d="M36 72 L70 77 L72 96 L34 96 Z" fill="#c29a88"/><path d="M34 50 C34 40 36 34 40 31 C50 26 66 25 74 33 C77 45 77 60 73 70 C69 78 64 82 60 82.5 C52 83 44 78 39 71 C35 64 34 57 34 50 Z" fill="url(#fg)"/><path d="M21 52 C20 40 21 30 26 18 C32 8 40 4.5 48 4.5 C60 5 70 12 75 22 C78 30 79 38 78.5 46 L75 47 C74 40 73 35 70 32 C64 27 56 26 48 28 C42 30 38 33 36 38 C35 44 34 52 34.5 60 L34 66 C32 70 29 71 25 70 C22 67 21 60 21 52 Z" fill="#3a2a21"/><ellipse cx="28.6" cy="57" rx="5" ry="7.5" fill="#c09280"/><path d="M39 41 C44 38.5 50 38.5 55 40.5 M62 38.5 C66 37 70 37.5 74 39" stroke="#3a2a22" stroke-width="2.2" fill="none"/><ellipse cx="49.5" cy="45.5" rx="3.8" ry="1.7" fill="#4a3830"/><ellipse cx="68" cy="43.5" rx="3.2" ry="1.6" fill="#4a3830"/><path d="M59 48 L61 56 L58 57" stroke="#a87c68" stroke-width="1.2" fill="none"/><path d="M54 66 C59 68 65 68 69 66" stroke="#e6cfc4" stroke-width="2" fill="none"/><path d="M3 96 C12 90 24 83 33 79.5 L40 88 L50 96 Z" fill="#232323"/><path d="M69 83 L73 85 C77 89 80 92 83 96 L64 96 Z" fill="#262626"/><path d="M34 80 L45 96 M37.5 80 L49 95" stroke="#e0e0e0" stroke-width="1.1" opacity=".75"/><path d="M69 84 L67 96" stroke="#ddd" stroke-width="1" opacity=".6"/></g></svg>
<svg style="left:0;top:0" width="1920" height="1080"><path d="M1060.2 1017.3 L1163.4 971.7 L1163.4 994.1 L1266.6 994.1 L1266.6 1039.4 L1163.4 1039.4 L1163.4 1061.3 Z" fill="none" stroke="#000" stroke-width="5" stroke-linejoin="round"/></svg>
<span class="t" style="left:1304px;top:1010.5px;font-size:20.5px;letter-spacing:.55px;line-height:1;color:#000">no edit button!</span>
<div class="b" style="left:0px;top:0px;width:93px;height:1080px;background:#000"></div>
<div class="b" style="left:0px;top:400px;width:93px;height:70px;background:#333"></div>
<div class="b" style="left:0px;top:262px;width:3px;height:57px;background:#76b9ed"></div>
<div class="b" style="left:0px;top:334px;width:3px;height:57px;background:#76b9ed"></div>
<div class="b" style="left:0px;top:400px;width:3px;height:70px;background:#76b9ed"></div>
<div class="b" style="left:0px;top:478px;width:3px;height:57px;background:#76b9ed"></div>
<svg style="left:34px;top:18px" width="24" height="24"><path d="M0 3.3 L10 2 L10 11.4 L0 11.4 Z M11.3 1.8 L24 0 L24 11.4 L11.3 11.4 Z M0 12.6 L10 12.6 L10 22 L0 20.7 Z M11.3 12.6 L24 12.6 L24 24 L11.3 22.2 Z" fill="#fff"/></svg>
<svg style="left:30px;top:74px" width="30" height="30"><circle cx="19.4" cy="12" r="8" fill="none" stroke="#fff" stroke-width="1.4"/><path d="M13.8 17.6 L4.5 27" stroke="#fff" stroke-width="1.5"/></svg>
<svg style="left:31px;top:140px" width="31" height="21"><rect x="6.5" y="0.5" width="18" height="19" fill="none" stroke="#fff" stroke-width="1.2"/><path d="M3 3 L0.5 3 L0.5 17 L3 17 M28 3 L30.5 3 L30.5 17 L28 17" fill="none" stroke="#fff" stroke-width="1.2"/></svg>
<svg style="left:29px;top:202px" width="34" height="34"><path d="M17 0.5 C11 1.5 5 1.5 1 2.5 C1 18 5 27 17 33.5 C29 27 33 18 33 2.5 C29 1.5 23 1.5 17 0.5 Z" fill="#fff"/><path d="M17 3.5 C12 4.3 7 4.3 4 5.2 C4 17.5 8 25 17 30 C26 25 30 17.5 30 5.2 C27 4.3 22 4.3 17 3.5 Z" fill="#c8102e"/><path d="M9.5 21 L12 9.5 L17 15.5 L22 9.5 L24.5 21 L21.3 21 L20.2 15 L17 19 L13.8 15 L12.7 21 Z" fill="#fff"/></svg>
<svg style="left:30px;top:275px" width="33" height="33"><rect x="12" y="4" width="20" height="26" fill="#fff" stroke="#2b579a" stroke-width="1.5"/><path d="M15 9 H29 M15 12.5 H29 M15 16 H29 M15 19.5 H29 M15 23 H29 M15 26 H29" stroke="#2b579a" stroke-width="1.3"/><path d="M0 4 L19 0 L19 33 L0 29 Z" fill="#2b579a"/><text x="2" y="22" font-family="Liberation Sans" font-weight="bold" font-size="13" fill="#fff">W</text></svg>
<svg style="left:29px;top:346px" width="34" height="34"><circle cx="17" cy="17" r="16.5" fill="#db4437"/><path d="M17 17 L31.3 25.25 A16.5 16.5 0 0 1 2.7 25.25 Z" fill="#0f9d58"/><path d="M17 17 L17 0.5 A16.5 16.5 0 0 1 31.3 25.25 Z" fill="#f4b400"/><path d="M17 0.5 A16.5 16.5 0 0 0 2.7 8.75 L9.9 21 L17 8.7 L31.3 8.75 A16.5 16.5 0 0 0 17 0.5 Z" fill="#db4437"/><circle cx="17" cy="17" r="7.6" fill="#fff"/><circle cx="17" cy="17" r="6" fill="#4285f4"/></svg>
<svg style="left:30px;top:419px" width="32" height="32"><rect x="0.5" y="0.5" width="31" height="31" fill="#333" stroke="#c8c8c8"/><path d="M0.5 8.5 H13.5 M0.5 24.5 H13.5 M6.5 24.5 V31.5 M13.5 0.5 V31.5 M13.5 19.5 H31.5" stroke="#c8c8c8" stroke-width="1"/><rect x="2" y="10" width="10" height="13" fill="#d02020"/><rect x="3" y="11" width="5" height="5" fill="#ff8080" opacity=".6"/><rect x="15" y="2" width="15" height="16" fill="#f0b000"/><rect x="16" y="3" width="8" height="7" fill="#ffe070" opacity=".7"/><rect x="15" y="21" width="15" height="9" fill="#4a8ae8"/><rect x="16" y="22" width="13" height="3" fill="#a0c8ff" opacity=".7"/></svg>
<svg style="left:28px;top:489px" width="36" height="36"><rect x="0.5" y="0.5" width="20" height="25" fill="#f4f4f4" stroke="#bbb"/><path d="M3 6 L5 9 L9 3 M3 13 L5 16 L9 10" fill="none" stroke="#1e90ff" stroke-width="1.6"/><path d="M11 7 H17 M11 14 H17 M11 21 H17" stroke="#aaa"/><rect x="3" y="18" width="5" height="5" fill="none" stroke="#888"/><rect x="0" y="27" width="36" height="9" fill="#26385c"/><path d="M20 31.5 H23 M26 31.5 H29 M32 31.5 H35" stroke="#8899bb" stroke-width="3"/></svg>
<div class="b" style="left:0px;top:573px;width:93px;height:26px;background:#f0f0f0"></div>
<div class="b" style="left:41px;top:573px;width:26px;height:26px;background:#cdcdcd"></div>
<svg style="left:8px;top:580px" width="10" height="12"><path d="M8 1 L3 6 L8 11" fill="none" stroke="#606060" stroke-width="2.2"/></svg>
<svg style="left:75px;top:580px" width="10" height="12"><path d="M2 1 L7 6 L2 11" fill="none" stroke="#606060" stroke-width="2.2"/></svg>
<svg style="left:56px;top:614px" width="12" height="20"><path d="M1 1 L10 10 L1 19" fill="none" stroke="#fff" stroke-width="1.4"/></svg>
<svg style="left:0;top:0" width="93" height="1080"><rect x="54.1" y="667.1" width="18" height="12.6" fill="none" stroke="#fff" stroke-width="1.2"/><rect x="55.8" y="668.8" width="14.6" height="9.2" fill="#fff"/><rect x="72.2" y="671" width="1.6" height="4.5" fill="#fff"/><path d="M50.8 663.5 V668 M55.2 663.5 V668 M49.5 668 H56.5 V670.5 A3.5 3.5 0 0 1 49.5 670.5 Z M53 674 V680" fill="none" stroke="#fff" stroke-width="1.1"/><path d="M53 731 A18 18 0 0 1 71 713" fill="none" stroke="#8a8a8a" stroke-width="1.1"/><path d="M58 731 A13 13 0 0 1 71 718 M63 731 A8 8 0 0 1 71 723" fill="none" stroke="#fff" stroke-width="1.3"/><rect x="68" y="728" width="3.2" height="3.2" fill="#fff"/><path d="M50.6 766 H54 L58.6 760.6 V777.4 L54 772 H50.6 Z" fill="none" stroke="#fff" stroke-width="1.1"/><path d="M62 765 L70 773 M70 765 L62 773" stroke="#fff" stroke-width="1.1"/></svg>
<svg style="left:34px;top:807px" width="24" height="26"><path d="M0 0 H24 V18 H15 L12 22 L9 18 H0 Z" fill="#fff"/><path d="M5 5 H19 M5 9 H19 M5 13 H14" stroke="#000" stroke-width="1.3"/></svg>
<svg style="left:29px;top:863px" width="34" height="20"><rect x="0.6" y="0.6" width="32.8" height="18.8" rx="1" fill="none" stroke="#fff" stroke-width="1.2"/><path d="M4 5.5 H30 M4 9 H30" stroke="#fff" stroke-width="1" stroke-dasharray="1.5 2"/><path d="M4 13.5 H30" stroke="#fff" stroke-width="1.2" stroke-dasharray="4 2"/></svg>
<span class="t" style="left:28px;top:919px;font-size:18px;color:#fff;transform:scaleX(.98)">DAN</span>
<span class="t" style="left:25px;top:1003px;font-size:18px;color:#fff;transform:scaleX(.95)">15:33</span>
<div class="b" style="left:0px;top:1072px;width:93px;height:2px;background:#8a8a8a"></div>
</body></html>
